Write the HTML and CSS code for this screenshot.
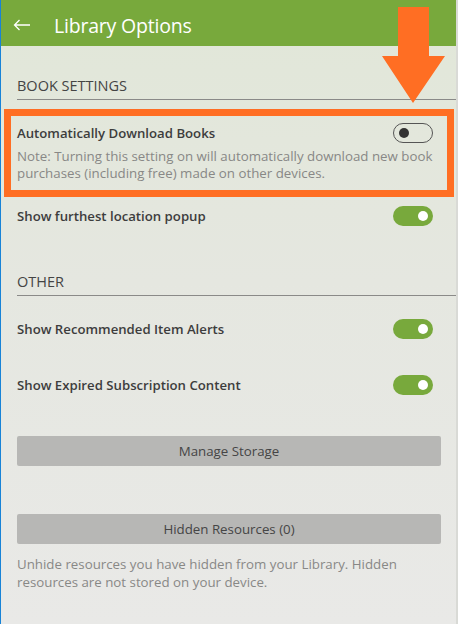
FILE: index.html
```html
<!DOCTYPE html>
<html lang="en">
<head>
    <meta charset="UTF-8">
    <meta name="viewport" content="width=device-width, initial-scale=1.0">
    <title>Library Options</title>
    <link rel="stylesheet" href="styles.css">
</head>
<body>
    <div class="app">
        <div class="topbar">
            <svg class="back" width="18" height="12" viewBox="0 0 18 12">
                <path d="M1.5 6 H17 M6.5 1 L1.5 6 L6.5 11" fill="none" stroke="#fff" stroke-width="1.3"/>
            </svg>
            <span class="title">Library Options</span>
        </div>

        <div class="section-title first">BOOK SETTINGS</div>
        <div class="row with-note">
            <div class="row-line">
                <span class="label">Automatically Download Books</span>
                <span class="toggle off"></span>
            </div>
            <div class="note">Note: Turning this setting on will automatically download new book purchases (including free) made on other devices.</div>
        </div>
        <div class="row">
            <div class="row-line">
                <span class="label">Show furthest location popup</span>
                <span class="toggle on"></span>
            </div>
        </div>

        <div class="section-title">OTHER</div>
        <div class="row tall">
            <div class="row-line">
                <span class="label">Show Recommended Item Alerts</span>
                <span class="toggle on"></span>
            </div>
        </div>
        <div class="row tall">
            <div class="row-line">
                <span class="label">Show Expired Subscription Content</span>
                <span class="toggle on"></span>
            </div>
        </div>

        <button class="wide-btn storage">Manage Storage</button>
        <button class="wide-btn hidden-res">Hidden Resources (0)</button>
        <div class="note desc">Unhide resources you have hidden from your Library. Hidden resources are not stored on your device.</div>

        <!-- callout on top of the first setting -->
        <div class="callout-box"></div>
        <svg class="callout-arrow" width="64" height="97" viewBox="0 0 64 97">
            <polygon points="16,0 47,0 47,49 63,49 31,96 0,49 16,49" fill="#ff6e23"/>
        </svg>
    </div>
    <div class="edge"></div>
</body>
</html>
```

FILE: styles.css
```css
html, body {
    margin: 0;
    height: 100%;
}
body {
    display: flex;
    font-family: "Open Sans", "Noto Sans", sans-serif;
    background: #e8e8e6;
}
.app {
    position: relative;
    flex: 1;
    border-left: 1px solid #1883d7;
    background: linear-gradient(#e1e7d8 0%, #e5e7e0 45%, #e9e9e7 100%);
    min-height: 624px;
}
.edge {
    width: 2px;
    background: #d9dad6;
}

.topbar {
    box-sizing: border-box;
    height: 46px;
    background: #78a93c;
    display: flex;
    align-items: center;
    padding: 4px 0 0 12px;
}
.back {
    display: block;
}
.title {
    color: #fff;
    font-size: 19.5px;
    margin-left: 23px;
    letter-spacing: -0.2px;
}

.section-title {
    margin-left: 16px;
    padding-top: 28px;
    padding-bottom: 3px;
    line-height: 20px;
    font-size: 14.5px;
    color: #444;
    border-bottom: 1px solid #8a8a88;
    margin-bottom: 5px;
}
.section-title.first {
    padding-top: 30px;
}

.row {
    padding: 18px 23px 18px 16px;
}
.row.with-note {
    padding-bottom: 6px;
}
.row-line {
    display: flex;
    align-items: center;
    justify-content: space-between;
    height: 20px;
}
.label {
    font-size: 13.2px;
    font-weight: 600;
    color: #3d3d3d;
}
.note {
    margin-top: 5px;
    margin-right: -12px;
    font-size: 13.3px;
    line-height: 17px;
    color: #888886;
}

.toggle {
    position: relative;
    box-sizing: border-box;
    width: 40px;
    height: 20px;
    border-radius: 10px;
}
.toggle::after {
    content: "";
    position: absolute;
    top: 5px;
    width: 10px;
    height: 10px;
    border-radius: 50%;
}
.toggle.on {
    background: #78a93c;
}
.toggle.on::after {
    right: 5px;
    background: #fff;
}
.toggle.off {
    border: 1px solid #555;
}
.toggle.off::after {
    top: 4px;
    left: 5px;
    background: #333;
}

.wide-btn {
    display: block;
    box-sizing: border-box;
    width: 424px;
    height: 30px;
    margin-left: 16px;
    border: none;
    border-radius: 2px;
    background: #b7b7b5;
    color: #454545;
    font-family: inherit;
    font-size: 13.3px;
}
.storage {
    margin-top: 23px;
}
.hidden-res {
    margin-top: 48px;
}
.desc {
    margin-top: 11px;
    margin-left: 16px;
    line-height: 18px;
    padding-right: 30px;
}

.callout-box {
    position: absolute;
    left: 3px;
    top: 109px;
    width: 436px;
    height: 74px;
    border: 7px solid #ff6e23;
}
.callout-arrow {
    position: absolute;
    left: 381px;
    top: 7px;
}
```
